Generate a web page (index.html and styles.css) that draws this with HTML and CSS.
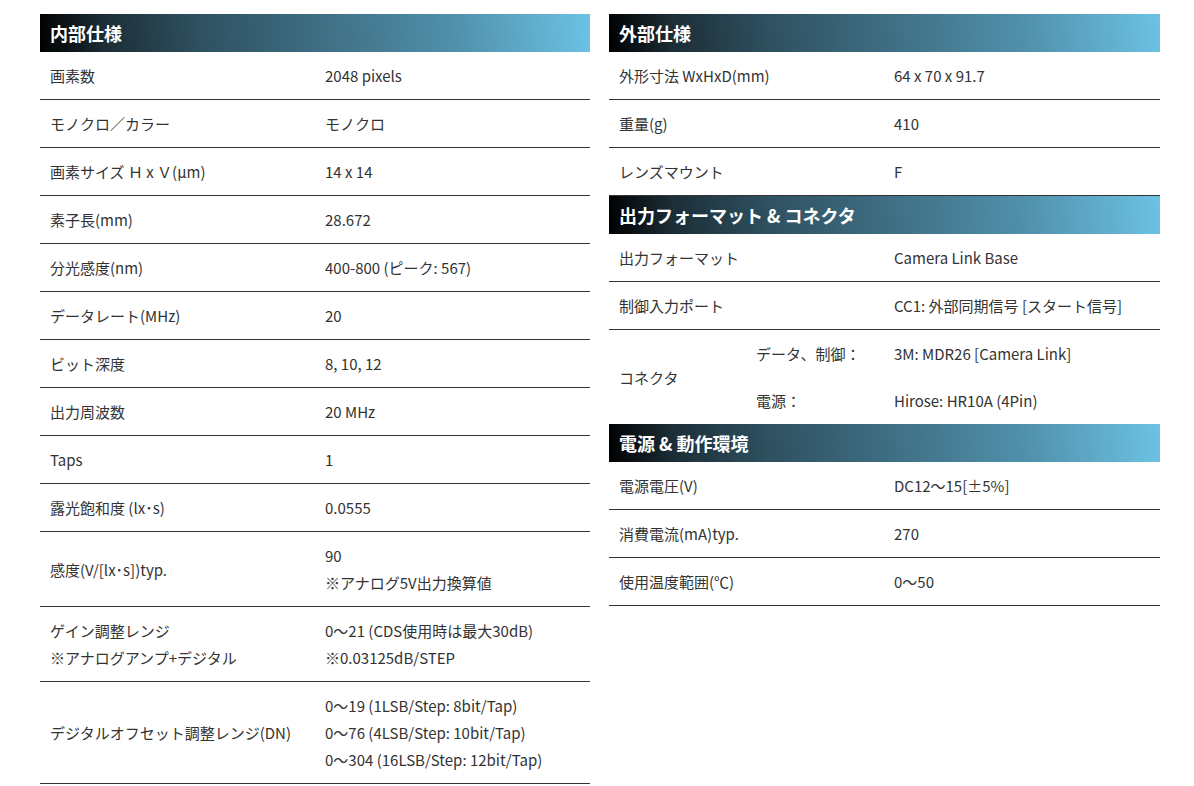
FILE: index.html
```html
<!DOCTYPE html>
<html lang="ja">
<head>
<meta charset="utf-8">
<link rel="stylesheet" href="styles.css">
</head>
<body>
<div class="page">
  <div class="col col-left">
    <div class="sec-head">内部仕様</div>
    <div class="row"><div class="k">画素数</div><div class="v">2048 pixels</div></div>
    <div class="row"><div class="k">モノクロ／カラー</div><div class="v">モノクロ</div></div>
    <div class="row"><div class="k">画素サイズ Ｈ x Ｖ(μm)</div><div class="v">14 x 14</div></div>
    <div class="row"><div class="k">素子長(mm)</div><div class="v">28.672</div></div>
    <div class="row"><div class="k">分光感度(nm)</div><div class="v">400-800 (ピーク: 567)</div></div>
    <div class="row"><div class="k">データレート(MHz)</div><div class="v">20</div></div>
    <div class="row"><div class="k">ビット深度</div><div class="v">8, 10, 12</div></div>
    <div class="row"><div class="k">出力周波数</div><div class="v">20 MHz</div></div>
    <div class="row"><div class="k">Taps</div><div class="v">1</div></div>
    <div class="row"><div class="k">露光飽和度 (lx･s)</div><div class="v">0.0555</div></div>
    <div class="row"><div class="k">感度(V/[lx･s])typ.</div><div class="v">90<br>※アナログ5V出力換算値</div></div>
    <div class="row"><div class="k">ゲイン調整レンジ<br>※アナログアンプ+デジタル</div><div class="v">0～21 (CDS使用時は最大30dB)<br>※0.03125dB/STEP</div></div>
    <div class="row"><div class="k">デジタルオフセット調整レンジ(DN)</div><div class="v">0～19 (1LSB/Step: 8bit/Tap)<br>0～76 (4LSB/Step: 10bit/Tap)<br>0～304 (16LSB/Step: 12bit/Tap)</div></div>
  </div>
  <div class="col col-right">
    <div class="sec-head">外部仕様</div>
    <div class="row"><div class="k">外形寸法 WxHxD(mm)</div><div class="v">64 x 70 x 91.7</div></div>
    <div class="row"><div class="k">重量(g)</div><div class="v">410</div></div>
    <div class="row"><div class="k">レンズマウント</div><div class="v">F</div></div>
    <div class="sec-head">出力フォーマット &amp; コネクタ</div>
    <div class="row"><div class="k">出力フォーマット</div><div class="v">Camera Link Base</div></div>
    <div class="row"><div class="k">制御入力ポート</div><div class="v">CC1: 外部同期信号 [スタート信号]</div></div>
    <div class="row row-conn">
      <div class="k conn-k">コネクタ</div>
      <div class="sub">
        <div class="sub-row"><div class="sk">データ、制御：</div><div class="v">3M: MDR26 [Camera Link]</div></div>
        <div class="sub-row"><div class="sk">電源：</div><div class="v">Hirose: HR10A (4Pin)</div></div>
      </div>
    </div>
    <div class="sec-head">電源 &amp; 動作環境</div>
    <div class="row"><div class="k">電源電圧(V)</div><div class="v">DC12～15[±5%]</div></div>
    <div class="row"><div class="k">消費電流(mA)typ.</div><div class="v">270</div></div>
    <div class="row"><div class="k">使用温度範囲(℃)</div><div class="v">0～50</div></div>
  </div>
</div>
</body>
</html>
```

FILE: styles.css
```css
html, body {
  margin: 0;
  padding: 0;
  background: #ffffff;
}
body {
  font-family: "Noto Sans CJK JP", "Noto Sans", sans-serif;
  font-size: 15px;
  color: #333333;
}
.page {
  display: flex;
  align-items: flex-start;
  gap: 19px;
  padding: 14px 0 0 40px;
}
.col-left {
  width: 550px;
}
.col-right {
  width: 551px;
}
.sec-head {
  height: 38px;
  line-height: 38px;
  padding-left: 10px;
  font-size: 18px;
  font-weight: bold;
  color: #ffffff;
  background: linear-gradient(84deg, #000000 0%, #1c2e37 12%, #2f5262 30%, #3e6d82 50%, #5090ab 75%, #6cc2e4 100%);
}
.row {
  display: grid;
  grid-template-columns: 275px 1fr;
  align-items: center;
  border-bottom: 1px solid #333333;
}
.k, .v {
  padding: 10px 10px;
  line-height: 27px;
}
.row-conn {
  grid-template-columns: 147px 1fr;
  border-bottom: none;
}
.sub-row {
  display: grid;
  grid-template-columns: 128px 1fr;
  align-items: center;
}
.sk {
  padding: 10px 0;
  line-height: 27px;
}
```
